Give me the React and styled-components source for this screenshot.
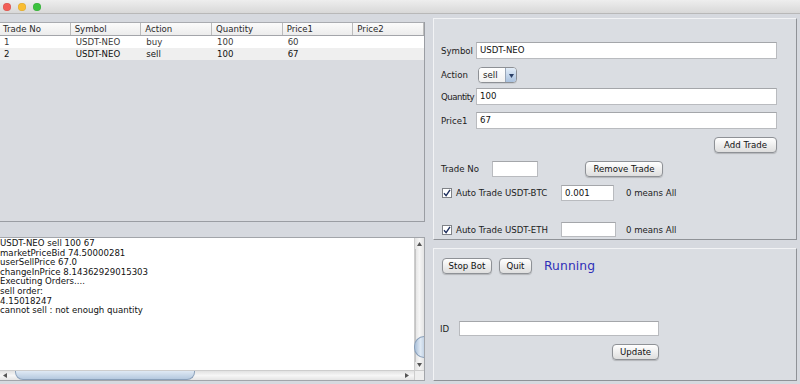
import React from "react";
import styled, { createGlobalStyle } from "styled-components";

const Global = createGlobalStyle`
  html, body { margin: 0; padding: 0; }
  body {
    width: 800px; height: 384px; overflow: hidden;
    background: #d6d9df;
    font-family: "DejaVu Sans", "Liberation Sans", sans-serif;
    font-size: 8.6px;
    color: #1a1a1a;
  }
`;

const Window = styled.div`
  width: 800px; height: 384px;
  display: flex; flex-direction: column;
  background: #d6d9df;
  overflow: hidden;
`;

const TitleBar = styled.div`
  height: 13px; flex: none;
  display: flex; align-items: center; gap: 7px;
  padding-left: 3px;
  background: linear-gradient(#eeeeee, #d8d8d8);
  border-bottom: 1px solid #b8b8b8;
`;

const Light = styled.span`
  width: 8px; height: 8px; border-radius: 50%;
  background: ${(p) => p.$c};
  box-shadow: inset 0 0 0 0.5px rgba(0,0,0,0.12);
`;

const Body = styled.div`
  flex: 1;
  display: grid;
  grid-template-columns: 425px 1fr;
  column-gap: 8px;
  padding-right: 3px;
`;

const LeftCol = styled.div`
  display: flex; flex-direction: column;
  padding-top: 8px;
`;

const TablePane = styled.div`
  height: 199px;
  border-right: 1px solid #9a9da3;
  border-bottom: 1px solid #9a9da3;
  background: #d9dbe0;
  display: flex; flex-direction: column;
`;

const HeaderRow = styled.div`
  display: grid;
  grid-template-columns: repeat(6, 1fr);
  height: 12px;
  border-top: 1px solid #a9abb0;
  border-bottom: 1px solid #a3a5aa;
  background: linear-gradient(#fbfbfb, #ececec);
`;

const HeadCell = styled.div`
  padding-left: ${(p) => (p.$first ? 3 : 4)}px;
  line-height: 12px;
  color: #2a2a2a;
  border-right: 1px solid #bcbcbc;
  white-space: nowrap;
  overflow: hidden;
`;

const DataRow = styled.div`
  display: grid;
  grid-template-columns: repeat(6, 1fr);
  height: 12px;
  background: ${(p) => (p.$alt ? "#efefef" : "#ffffff")};
  color: ${(p) => (p.$alt ? "#111" : "#3a3a3a")};
`;

const Cell = styled.div`
  padding-left: ${(p) => (p.$first ? 4 : 5)}px;
  line-height: 12px;
  white-space: nowrap;
`;

const LogPane = styled.div`
  margin-top: 15px;
  height: 142px;
  border-top: 1px solid #a2a5aa;
  border-right: 1px solid #a2a5aa;
  border-bottom: 1px solid #a2a5aa;
  display: grid;
  grid-template-columns: 1fr 10px;
  grid-template-rows: 1fr 10px;
`;

const LogText = styled.div`
  background: #fff;
  padding-top: 1px;
  line-height: 9.6px;
  white-space: pre;
  color: #111;
  overflow: hidden;
`;

const VScroll = styled.div`
  display: flex; flex-direction: column; align-items: center;
  background: linear-gradient(to right, #e2e2e2, #f6f6f6 50%, #e4e4e4);
  border-left: 1px solid #cdcdcd;
`;

const HScroll = styled.div`
  display: flex; align-items: center;
  background: linear-gradient(#e2e2e2, #f6f6f6 50%, #e4e4e4);
  border-top: 1px solid #cdcdcd;
`;

const Corner = styled.div`
  background: #eeeeee;
  border-left: 1px solid #cdcdcd;
  border-top: 1px solid #cdcdcd;
`;

const Arrow = styled.svg`
  flex: none;
  display: block;
`;

const Spacer = styled.div`
  flex: none;
  width: ${(p) => p.$w || 0}px;
  height: ${(p) => p.$h || 0}px;
`;

const VGroove = styled.div`
  flex: 1; width: 100%;
  display: flex; flex-direction: column; justify-content: flex-end;
  align-items: flex-end;
  padding-bottom: 4px;
  border-left: 1px solid #c4c4c4;
  box-sizing: border-box;
  margin-top: 3px;
`;

const VThumb = styled.div`
  width: 9px; height: 20px;
  border-radius: 10px 0 0 10px;
  background: linear-gradient(to right, #a9bfd8, #dfe9f4 60%, #c4d4e6);
  border: 1px solid #8aa0ba;
  border-right: none;
`;

const HGroove = styled.div`
  flex: 1; height: 100%;
  display: flex; align-items: center;
  padding-left: 8px;
`;

const HThumb = styled.div`
  width: 178px; height: 8px;
  border-radius: 0 0 8px 8px;
  background: linear-gradient(#dfe9f4, #b5c9df);
  border: 1px solid #8aa0ba;
  border-top: none;
`;

const RightCol = styled.div`
  display: flex; flex-direction: column;
  padding-top: 4px;
  gap: 8px;
`;

const Panel = styled.section`
  height: ${(p) => p.$h}px;
  box-sizing: border-box;
  background: #dadde2;
  border: 1px solid;
  border-color: #f2f3f5 #8f9297 #8f9297 #f2f3f5;
  padding: ${(p) => p.$pad};
  display: flex; flex-direction: column;
`;

const FormRow = styled.div`
  display: grid;
  grid-template-columns: 35px 301px;
  align-items: center;
  margin-top: ${(p) => p.$mt || 0}px;
  height: ${(p) => p.$h || 17}px;
`;

const Label = styled.span`
  color: #1c1c1c;
  white-space: nowrap;
  width: ${(p) => (p.$w ? p.$w + "px" : "auto")};
  letter-spacing: ${(p) => (p.$tight ? "-0.5px" : "normal")};
  flex: none;
`;

const Input = styled.div`
  box-sizing: border-box;
  height: ${(p) => p.$h || 17}px;
  width: ${(p) => (p.$w ? p.$w + "px" : "100%")};
  background: #fff;
  border: 1px solid #b9bbbf;
  border-top-color: #a4a6aa;
  padding-left: 3px;
  line-height: ${(p) => (p.$h || 17) - 2}px;
  color: #111;
  flex: none;
`;

const Combo = styled.div`
  box-sizing: border-box;
  width: 39px; height: 16px;
  margin-left: 2px;
  display: flex;
  border: 1px solid #8d9095;
  border-radius: 4px;
  overflow: hidden;
  background: #fff;
  box-shadow: 0 1px 0 rgba(0,0,0,0.08);
`;

const ComboText = styled.span`
  flex: 1;
  padding-left: 4px;
  line-height: 14px;
  background: linear-gradient(#ffffff, #f1f1f1);
`;

const ComboBtn = styled.span`
  width: 10px;
  display: flex; align-items: center; justify-content: center;
  border-left: 1px solid #9aa7b8;
  background: linear-gradient(#e3edf8, #a9c1de);
`;

const Line = styled.div`
  display: flex; align-items: center;
  height: ${(p) => p.$h || 16}px;
  margin-top: ${(p) => p.$mt || 0}px;
  justify-content: ${(p) => p.$justify || "flex-start"};
  width: ${(p) => (p.$w ? p.$w + "px" : "auto")};
`;

const Button = styled.button`
  box-sizing: border-box;
  width: ${(p) => p.$w}px;
  height: 16px;
  margin-left: ${(p) => p.$ml || 0}px;
  padding: 0;
  flex: none;
  font: inherit;
  color: #111;
  border: 1px solid #8e9196;
  border-radius: 4px;
  background: linear-gradient(#ffffff, #f0f0f0 45%, #dedede);
  box-shadow: 0 1px 1px rgba(0,0,0,0.18);
  line-height: 14px;
`;

const Check = styled.span`
  box-sizing: border-box;
  width: 10px; height: 10px;
  margin-left: 1px; margin-right: 4px;
  background: #fff;
  border: 1px solid #7f8287;
  display: flex; align-items: center; justify-content: center;
  flex: none;
`;

const Hint = styled.span`
  margin-left: ${(p) => p.$ml || 12}px;
  white-space: nowrap;
  color: #1c1c1c;
`;

const Status = styled.span`
  margin-left: 12px;
  font-size: 12.3px;
  color: #2f2fb8;
  letter-spacing: 0.1px;
`;

const Tick = () => (
  <svg width="8" height="8" viewBox="0 0 8 8">
    <path d="M1 4.2 L3.1 6.6 L7 0.8" fill="none" stroke="#1e2f5e" strokeWidth="1.4" />
  </svg>
);

const Tri = ({ dir, size = 5, color = "#555" }) => {
  const pts = {
    up: "0,5 2.5,1 5,5",
    down: "0,1 5,1 2.5,5",
    left: "5,0 5,5 1,2.5",
    right: "0,0 0,5 4,2.5",
  }[dir];
  return (
    <Arrow width={size} height={size} viewBox="0 0 5 5">
      <polygon points={pts} fill={color} />
    </Arrow>
  );
};

const columns = ["Trade No", "Symbol", "Action", "Quantity", "Price1", "Price2"];
const rows = [
  ["1", "USDT-NEO", "buy", "100", "60", ""],
  ["2", "USDT-NEO", "sell", "100", "67", ""],
];

const log = [
  "USDT-NEO sell 100 67",
  "marketPriceBid 74.50000281",
  "userSellPrice 67.0",
  "changeInPrice 8.14362929015303",
  "Executing Orders....",
  "sell order:",
  "4.15018247",
  "cannot sell : not enough quantity",
].join("\n");

export default function App() {
  return (
    <>
      <Global />
      <Window>
        <TitleBar>
          <Light $c="#f25e57" />
          <Light $c="#f9bd31" />
          <Light $c="#3bc23e" />
        </TitleBar>
        <Body>
          <LeftCol>
            <TablePane>
              <HeaderRow>
                {columns.map((c, i) => (
                  <HeadCell key={c} $first={i === 0}>{c}</HeadCell>
                ))}
              </HeaderRow>
              {rows.map((r, ri) => (
                <DataRow key={ri} $alt={ri % 2 === 1}>
                  {r.map((v, i) => (
                    <Cell key={i} $first={i === 0}>{v}</Cell>
                  ))}
                </DataRow>
              ))}
            </TablePane>
            <LogPane>
              <LogText>{log}</LogText>
              <VScroll>
                <Spacer $h={3} />
                <Tri dir="up" size={5} />
                <VGroove>
                  <VThumb />
                </VGroove>
                <Tri dir="down" size={5} />
                <Spacer $h={3} />
              </VScroll>
              <HScroll>
                <Spacer $w={2} />
                <Tri dir="left" size={5} />
                <HGroove>
                  <HThumb />
                </HGroove>
                <Tri dir="right" size={5} />
                <Spacer $w={4} />
              </HScroll>
              <Corner />
            </LogPane>
          </LeftCol>

          <RightCol>
            <Panel $h={222} $pad="23px 19px 0 7px">
              <FormRow>
                <Label>Symbol</Label>
                <Input>USDT-NEO</Input>
              </FormRow>
              <FormRow $mt={8} $h={16}>
                <Label>Action</Label>
                <Combo>
                  <ComboText>sell</ComboText>
                  <ComboBtn>
                    <Tri dir="down" size={5} color="#2a3f66" />
                  </ComboBtn>
                </Combo>
              </FormRow>
              <FormRow $mt={5}>
                <Label $tight>Quantity</Label>
                <Input>100</Input>
              </FormRow>
              <FormRow $mt={7}>
                <Label>Price1</Label>
                <Input>67</Input>
              </FormRow>
              <Line $mt={8} $justify="flex-end">
                <Button $w={63}>Add Trade</Button>
              </Line>
              <Line $mt={8}>
                <Label $w={51}>Trade No</Label>
                <Input $w={46} $h={16} />
                <Button $w={78} $ml={47}>Remove Trade</Button>
              </Line>
              <Line $mt={8}>
                <Check><Tick /></Check>
                <Label $w={105}>Auto Trade USDT-BTC</Label>
                <Input $w={53} $h={16}>0.001</Input>
                <Hint $ml={12}>0 means All</Hint>
              </Line>
              <Line $mt={21} $h={15}>
                <Check><Tick /></Check>
                <Label $w={105}>Auto Trade USDT-ETH</Label>
                <Input $w={55} $h={15} />
                <Hint $ml={10}>0 means All</Hint>
              </Line>
            </Panel>

            <Panel $h={133} $pad="9px 0 0 6px">
              <Line>
                <Button $w={50} $ml={2}>Stop Bot</Button>
                <Button $w={33} $ml={7}>Quit</Button>
                <Status>Running</Status>
              </Line>
              <Line $mt={47} $h={15}>
                <Label $w={19}>ID</Label>
                <Input $w={200} $h={15} />
              </Line>
              <Line $mt={8} $w={219} $justify="flex-end">
                <Button $w={47}>Update</Button>
              </Line>
            </Panel>
          </RightCol>
        </Body>
      </Window>
    </>
  );
}
